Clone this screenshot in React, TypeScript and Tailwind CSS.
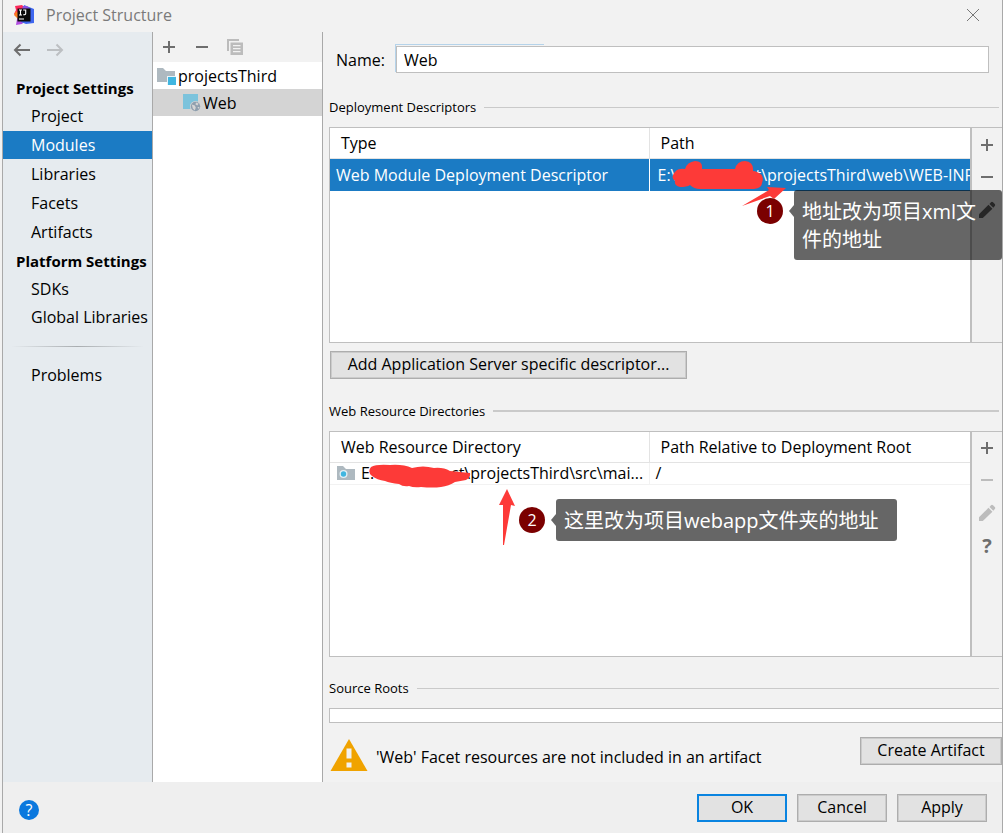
import type { ReactNode } from "react";

const FONT = "font-['Open_Sans','Noto_Sans_CJK_SC',sans-serif]";

const PROJECT_ITEMS = ["Project", "Modules", "Libraries", "Facets", "Artifacts"];
const PLATFORM_ITEMS = ["SDKs", "Global Libraries"];

function PlusIcon({ className = "text-[#6e6e6e]" }: { className?: string }) {
  return (
    <svg viewBox="0 0 16 16" className={`size-4 ${className}`} fill="currentColor">
      <path d="M7 2h2v5h5v2H9v5H7V9H2V7h5z" />
    </svg>
  );
}

function MinusIcon({ className = "text-[#6e6e6e]" }: { className?: string }) {
  return (
    <svg viewBox="0 0 16 16" className={`size-4 ${className}`} fill="currentColor">
      <path d="M2 7h12v2H2z" />
    </svg>
  );
}

function PencilIcon({ className = "text-[#bcbcbc]" }: { className?: string }) {
  return (
    <svg viewBox="0 0 18 18" className={`size-[18px] ${className}`} fill="currentColor">
      <path d="M1 13.200 10.500 3.800l3.900 3.900L4.800 17H1z" />
      <path d="M11.500 2.900 13 1.300q1-.9 2 0L16.800 3q.9 1 0 2l-1.500 1.700z" />
    </svg>
  );
}

function ArrowIcon({ flip = false }: { flip?: boolean }) {
  return (
    <svg viewBox="0 0 18 14" className={`h-3.5 w-[18px] ${flip ? "-scale-x-100" : ""}`} fill="none" stroke="currentColor" strokeWidth="2">
      <path d="M17 7H2M7.500 1.500 2 7l5.500 5.500" />
    </svg>
  );
}

function IdeaLogo() {
  return (
    <svg viewBox="0 0 20 20" className="size-5">
      <path d="M1 1 8 0l4 4-5 9-7-4 2-4z" fill="#fc2a5b" />
      <path d="M3 9l4 3 3 5-2 2-6 1 1-6z" fill="#b04be0" />
      <path d="M0 10l2-4 3 3-1 5z" fill="#fb7a1e" />
      <path d="M10 0l5 2 5 2v14l-8 1-5-2z" fill="#3f67ef" />
      <path d="M9 1l4 0 3 3H8z" fill="#8a4ee0" />
      <path d="M3.500 3.500h13v13h-13z" fill="#0a0a0a" />
      <path d="M5 5h3M6.500 5v5M5 10h3M9.200 5h2.500v3.500q0 1.500-2.500 1.200M5 14h5" fill="none" stroke="#fff" strokeWidth="1.100" />
    </svg>
  );
}

function ModuleIcon() {
  return (
    <svg viewBox="0 0 20 18" className="h-[18px] w-5 shrink-0">
      <path d="M0 1h6l3 3h9v11H0z" fill="#aeb9c0" />
      <path d="M10 9h9v9h-9z" fill="#e9f4f9" />
      <path d="M11 10h8v8h-8z" fill="#40b6e0" />
    </svg>
  );
}

function WebFacetIcon() {
  return (
    <svg viewBox="0 0 18 18" className="size-[18px] shrink-0">
      <path d="M0 0h15v15H0z" fill="#7cc3dc" />
      <circle cx="12.500" cy="12.500" r="5.500" fill="#d4d4d4" />
      <circle cx="12.500" cy="12.500" r="4.700" fill="#8f9fae" />
      <path d="M8.800 10.500l3 1 1 2-1 3-2-2zM13 8.500l2.500 1-1 2-2-1zM14.500 13l2 0-1 2z" fill="#d4d4d4" />
    </svg>
  );
}

function WebFolderIcon() {
  return (
    <svg viewBox="0 0 18 14" className="h-3.5 w-[18px] shrink-0">
      <path d="M0 0h6l3 3h9v11H0z" fill="#aeb9c0" />
      <circle cx="6.500" cy="8" r="4" fill="#e3eff5" />
      <circle cx="6.500" cy="8" r="2.700" fill="#40b6e0" />
    </svg>
  );
}

function NavItem({ label, active = false }: { label: string; active?: boolean }) {
  return (
    <a
      href="#"
      aria-current={active ? "page" : undefined}
      className={`flex h-7 items-center pl-7 whitespace-nowrap ${active ? "bg-[#1b7bc4] text-white" : ""}`}
    >
      {label}
    </a>
  );
}

function SectionTitle({ children, thick = false }: { children: ReactNode; thick?: boolean }) {
  return (
    <div className="flex h-5 items-center gap-2 pr-[3px]">
      <h2 className="text-[13px] leading-5">{children}</h2>
      <span className={`flex-1 bg-[#cacaca] ${thick ? "h-0.5" : "h-px"}`} />
    </div>
  );
}

function PushButton({ children, primary = false, className = "" }: { children: ReactNode; primary?: boolean; className?: string }) {
  return (
    <button
      type="button"
      className={`flex h-7 items-center justify-center bg-[#e2e2e2] pb-0.5 whitespace-nowrap ${
        primary ? "border-2 border-[#0a84e0]" : "border border-[#adadad] shadow-[inset_0_0_0_1px_#cbcbcb]"
      } ${className}`}
    >
      {children}
    </button>
  );
}

function Badge({ n, className }: { n: number; className: string }) {
  return (
    <span className={`absolute flex size-[26px] items-center justify-center rounded-full bg-[#7b0000] text-base text-white ${className}`}>
      {n}
    </span>
  );
}

function Callout({ children, className }: { children: ReactNode; className: string }) {
  return (
    <div className={`absolute rounded-[3px] bg-black/60 px-2 pt-2 pb-1.5 text-xl leading-7 text-white ${className}`}>
      <span className="absolute top-[15px] -left-[5px] border-y-[6px] border-r-[5px] border-y-transparent border-r-black/60" />
      {children}
    </div>
  );
}

function Sidebar() {
  return (
    <nav className="w-[150px] shrink-0 border-r border-[#a9a9a9] bg-[#e6ebef]">
      <div className="flex h-9 items-center gap-[15px] pl-2.5">
        <button type="button" aria-label="Back" className="text-[#6e6e6e]"><ArrowIcon /></button>
        <button type="button" aria-label="Forward" className="text-[#bcbfc2]"><ArrowIcon flip /></button>
      </div>
      <h2 className="mt-1.5 flex h-7 items-center pl-[13px] text-[15px] font-bold whitespace-nowrap">Project Settings</h2>
      <div className="flex flex-col gap-px">
        {PROJECT_ITEMS.map((item) => (
          <NavItem key={item} label={item} active={item === "Modules"} />
        ))}
      </div>
      <h2 className="mt-px flex h-7 items-center pl-[13px] text-[15px] font-bold whitespace-nowrap">Platform Settings</h2>
      {PLATFORM_ITEMS.map((item) => (
        <NavItem key={item} label={item} />
      ))}
      <div className="mx-2 mt-[15px] mb-3.5 h-px bg-linear-to-r from-transparent via-[#a9adb0] to-transparent" />
      <NavItem label="Problems" />
    </nav>
  );
}

function ModuleTree() {
  return (
    <section className="w-[170px] shrink-0 border-r border-[#a9a9a9] bg-white">
      <div className="flex h-[30px] items-center gap-[17px] bg-[#f2f2f2] pl-2">
        <button type="button" aria-label="Add"><PlusIcon /></button>
        <button type="button" aria-label="Remove"><MinusIcon /></button>
        <button type="button" aria-label="Copy">
          <svg viewBox="0 0 16 16" className="size-4" fill="#bcbcbc">
            <path d="M0 0h12v2H2v10H0z" />
            <path fillRule="evenodd" d="M3.500 3.500H16V16H3.500zM6 6v1.300h7.500V6zM6 9v1.300h7.500V9zM6 12v1.300h7.500V12z" />
          </svg>
        </button>
      </div>
      <ul>
        <li className="flex h-[27px] items-center gap-px pl-1">
          <ModuleIcon />
          projectsThird
        </li>
        <li className="flex h-[27px] items-center gap-0.5 bg-[#d4d4d4] pl-[30px]">
          <WebFacetIcon />
          Web
        </li>
      </ul>
    </section>
  );
}

function Descriptors() {
  return (
    <div className="relative flex h-[216px] border border-r-0 border-[#bfbfbf] bg-white">
      <div className="min-w-0 flex-1">
        <table className="w-full table-fixed text-left">
          <thead>
            <tr className="h-[30px] border-b border-[#e3e3e3]">
              <th className="w-[319px] border-r border-[#e3e3e3] py-0 pl-[11px] font-normal">Type</th>
              <th className="py-0 pl-[11px] font-normal">Path</th>
            </tr>
          </thead>
          <tbody>
            <tr className="h-[33px] bg-[#1b7bc4] text-white">
              <td className="border-r border-white pl-1.5 whitespace-nowrap">Web Module Deployment Descriptor</td>
              <td className="overflow-hidden pl-2 whitespace-nowrap">
                E:\<span className="inline-block w-[79px]" />t\projectsThird\web\WEB-INF
              </td>
            </tr>
          </tbody>
        </table>
      </div>
      <div className="flex w-8 flex-col items-center gap-4 border-l-2 border-[#bfbfbf] bg-[#f2f2f2] pt-[9px]">
        <button type="button" aria-label="Add descriptor"><PlusIcon /></button>
        <button type="button" aria-label="Remove descriptor"><MinusIcon /></button>
        <button type="button" aria-label="Edit descriptor"><PencilIcon className="text-[#5f5f5f]" /></button>
      </div>

      {/* marker strokes over the path */}
      <svg viewBox="0 0 124 50" className="absolute top-[32px] left-[342px] h-[50px] w-[124px]" fill="#fd3a38">
        <path d="M3 12q-5 5 0 9-1 5 5 6 7 0 10-2 4 4 10 4l54 0q8-1 8-6 3-8-5-11-2-1-4-1 1-9-8-10-8 0-10 8l-33 0Q31 1 23 1q-8 1-10 8Q6 8 3 12z" />
        <path d="M70 46 97 30l-2-3 19 1-12 11-4-3z" />
      </svg>
      <Badge n={1} className="top-[70px] left-[427px]" />
      <Callout className="top-[62px] left-[464px] w-[208px]">
        地址改为项目<span className="font-medium">xml</span>文件的地址
      </Callout>
    </div>
  );
}

function Resources() {
  return (
    <div className="relative flex h-[226px] border border-r-0 border-[#bfbfbf] bg-white">
      <div className="min-w-0 flex-1">
        <table className="w-full table-fixed text-left">
          <thead>
            <tr className="h-[30px] border-b border-[#e3e3e3]">
              <th className="w-[319px] border-r border-[#e3e3e3] py-0 pl-[11px] font-normal">Web Resource Directory</th>
              <th className="py-0 pl-[11px] font-normal">Path Relative to Deployment Root</th>
            </tr>
          </thead>
          <tbody>
            <tr className="h-[22px] border-b border-[#f2f2f2] leading-5">
              <td className="border-r border-[#f2f2f2] py-0 pl-[7px] whitespace-nowrap">
                <div className="flex items-center gap-1.5">
                  <WebFolderIcon />
                  <span>E:\<span className="inline-block w-[71px]" />ct\projectsThird\src\mai...</span>
                </div>
              </td>
              <td className="py-0 pl-1.5">/</td>
            </tr>
          </tbody>
        </table>
      </div>
      <div className="flex w-8 flex-col items-center gap-4 border-l-2 border-[#bfbfbf] bg-[#f2f2f2] pt-2">
        <button type="button" aria-label="Add directory"><PlusIcon /></button>
        <button type="button" aria-label="Remove directory"><MinusIcon className="text-[#bcbcbc]" /></button>
        <button type="button" aria-label="Edit directory"><PencilIcon /></button>
        <button type="button" aria-label="Help" className="text-xl leading-4 font-bold text-[#6e6e6e]">?</button>
      </div>

      {/* marker strokes over the directory */}
      <svg viewBox="0 0 155 86" className="absolute top-[32px] left-[38px] h-[86px] w-[155px]" fill="#fd3a38">
        <path d="M3 3q-4 5 1 9 5 4 13 5 5 2 14 3 4 3 10 2 5 2 12 1 12 1 20 0 8-1 14-5l11-2q5-3 4-7L82 7Q75 3 66 4 55 1 44 4 35 0 22 1 8 0 3 3z" />
        <path d="M139 25l8 17-4-1-7 40-1 0 0-40-4 0z" />
      </svg>
      <Badge n={2} className="top-[75px] left-[189px]" />
      <Callout className="top-[67px] left-[226px] w-[341px]">
        这里改为项目<span className="font-medium">webapp</span>文件夹的地址
      </Callout>
    </div>
  );
}

export default function App() {
  return (
    <div className={`flex min-h-screen flex-col border-r border-[#a9a9a9] bg-[#f2f2f2] pl-0.5 text-base leading-5 text-black ${FONT}`}>
      <div className="flex flex-1 flex-col border-l border-[#a9a9a9]">
        <header className="flex h-8 items-center pr-[23px] pb-0.5 pl-[11px]">
          <IdeaLogo />
          <h1 className="ml-3 flex-1 text-[#7a7a7a]">Project Structure</h1>
          <button type="button" aria-label="Close">
            <svg viewBox="0 0 12 12" className="size-3" fill="none" stroke="#777" strokeWidth="1">
              <path d="M0 0l12 12M12 0 0 12" />
            </svg>
          </button>
        </header>

        <div className="flex flex-1">
          <Sidebar />
          <ModuleTree />
          <main className="min-w-0 flex-1 pl-1.5">
            <div className="mt-3.5 flex h-7 items-start pr-[13px] pl-[7px]">
              <label htmlFor="facet-name" className="w-[60px] leading-7">Name:</label>
              <div className="relative flex min-w-0 flex-1">
                <span className="absolute -top-0.5 -left-px h-7 w-[149px] border-t border-l border-[#b5d3ea]" />
                <input
                  id="facet-name"
                  defaultValue="Web"
                  className="relative h-[27px] min-w-0 flex-1 border border-[#bfbfbf] bg-white px-[7px] outline-none"
                />
              </div>
            </div>

            <div className="mt-[23px] mb-2.5"><SectionTitle>Deployment Descriptors</SectionTitle></div>
            <Descriptors />
            <PushButton className="mt-2 ml-px w-[357px]">Add Application Server specific descriptor...</PushButton>

            <div className="mt-[22px] mb-2.5"><SectionTitle thick>Web Resource Directories</SectionTitle></div>
            <Resources />

            <div className="mt-[21px] mb-2.5"><SectionTitle>Source Roots</SectionTitle></div>
            <div className="h-[15px] border border-r-0 border-[#bfbfbf] bg-white" />

            <div className="mt-3.5 flex items-start pl-px">
              <svg viewBox="0 0 38 34" className="mt-px h-[34px] w-[38px]">
                <path d="M19 1 37.500 33H.5z" fill="#f0a300" />
                <path d="M16.500 10.500h5v10h-5zM16.500 24.500h5v5h-5z" fill="#f2f2f2" />
              </svg>
              <p className="mt-2.5 ml-2 flex-1">'Web' Facet resources are not included in an artifact</p>
              <PushButton className="w-[142px]">Create Artifact</PushButton>
            </div>
          </main>
        </div>

        <footer className="flex h-[51px] items-center gap-2.5 bg-[#efefef] pr-[15px] pl-4">
          <button type="button" aria-label="Help" className="mt-1 flex size-5 items-center justify-center rounded-full bg-[#0a78de] text-base text-white">
            ?
          </button>
          <div className="flex-1" />
          <PushButton primary className="w-[90px]">OK</PushButton>
          <PushButton className="w-[90px]">Cancel</PushButton>
          <PushButton className="w-[90px]">Apply</PushButton>
        </footer>
      </div>
    </div>
  );
}
